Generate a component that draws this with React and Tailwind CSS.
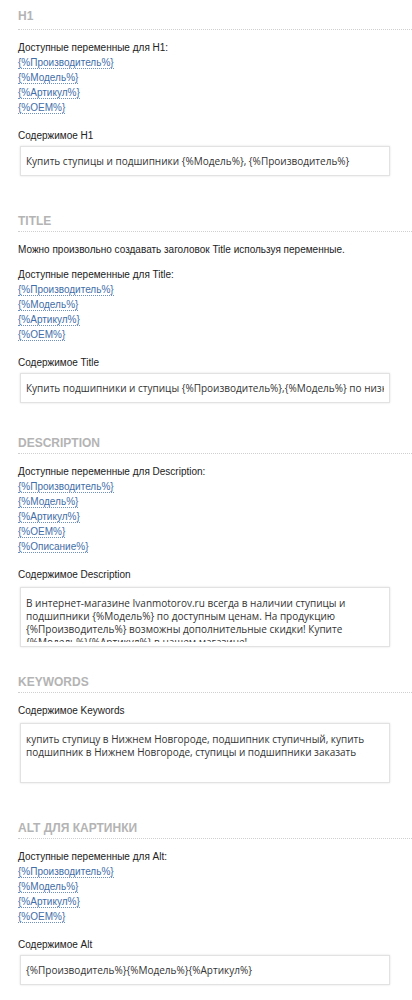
import React from "react";

const base = ["{%Производитель%}", "{%Модель%}", "{%Артикул%}", "{%OEM%}"];

function Heading({ children, className = "" }) {
  return (
    <div className={"border-b border-dotted border-[#cfcfcf] pb-[2px] " + className}>
      <div className="text-[12px] leading-[16px] font-bold uppercase text-[#b4b4b4]">{children}</div>
    </div>
  );
}

function Vars({ label, items }) {
  return (
    <div className="mt-[10px] text-[10px] leading-[15px] text-[#222]">
      <div>{label}</div>
      {items.map((v) => (
        <div key={v}>
          <span className="text-[#3f6ea8] border-b border-dotted border-[#6d8fbf]">{v}</span>
        </div>
      ))}
    </div>
  );
}

function Field({ label, value, tall }) {
  return (
    <div className="mt-[13px]">
      <div className="text-[10px] leading-[15px] text-[#222]">{label}</div>
      <div
        className={
          "ml-[2px] w-[370px] bg-white border border-[#e2e2e2] shadow-[0_0_2px_rgba(0,0,0,0.12)] px-[5px] text-[10px] text-[#333] " +
          (tall ? "mt-[5px] h-[60px] pt-[9px]" : "mt-[3px] h-[30px] flex items-center")
        }
        style={{ fontFamily: '"Open Sans", sans-serif' }}
      >
        {tall ? (
          <div className="h-[45px] overflow-hidden leading-[13px]">{value}</div>
        ) : (
          <div className="w-full whitespace-nowrap overflow-hidden">{value}</div>
        )}
      </div>
    </div>
  );
}

export default function App() {
  return (
    <div
      className="bg-white w-[412px] min-h-[1000px] pl-[18px] pt-[8px] overflow-hidden"
      style={{ fontFamily: '"Liberation Sans", Arial, sans-serif' }}
    >
      <Heading className="pb-[5px]">H1</Heading>
      <Vars label="Доступные переменные для H1:" items={base} />
      <Field label="Содержимое H1" value="Купить ступицы и подшипники {%Модель%}, {%Производитель%}" />

      <Heading className="mt-[37px]">Title</Heading>
      <div className="mt-[10px] text-[10px] leading-[15px] text-[#222]">
        Можно произвольно создавать заголовок Title используя переменные.
      </div>
      <div className="mt-[6px]">
        <Vars label="Доступные переменные для Title:" items={base} />
      </div>
      <Field
        label="Содержимое Title"
        value="Купить подшипники и ступицы {%Производитель%},{%Модель%} по низким ценам"
      />

      <Heading className="mt-[32px]">Description</Heading>
      <Vars label="Доступные переменные для Description:" items={[...base, "{%Описание%}"]} />
      <Field
        label="Содержимое Description"
        tall
        value="В интернет-магазине Ivanmotorov.ru всегда в наличии ступицы и подшипники {%Модель%} по доступным ценам. На продукцию {%Производитель%} возможны дополнительные скидки! Купите {%Модель%}{%Артикул%} в нашем магазине!"
      />

      <Heading className="mt-[27px]">Keywords</Heading>
      <div className="-mt-[3px]">
        <Field
          label="Содержимое Keywords"
          tall
          value="купить ступицу в Нижнем Новгороде, подшипник ступичный, купить подшипник в Нижнем Новгороде, ступицы и подшипники заказать"
        />
      </div>

      <Heading className="mt-[37px]">Alt для картинки</Heading>
      <Vars label="Доступные переменные для Alt:" items={base} />
      <Field label="Содержимое Alt" value="{%Производитель%}{%Модель%}{%Артикул%}" />
    </div>
  );
}
